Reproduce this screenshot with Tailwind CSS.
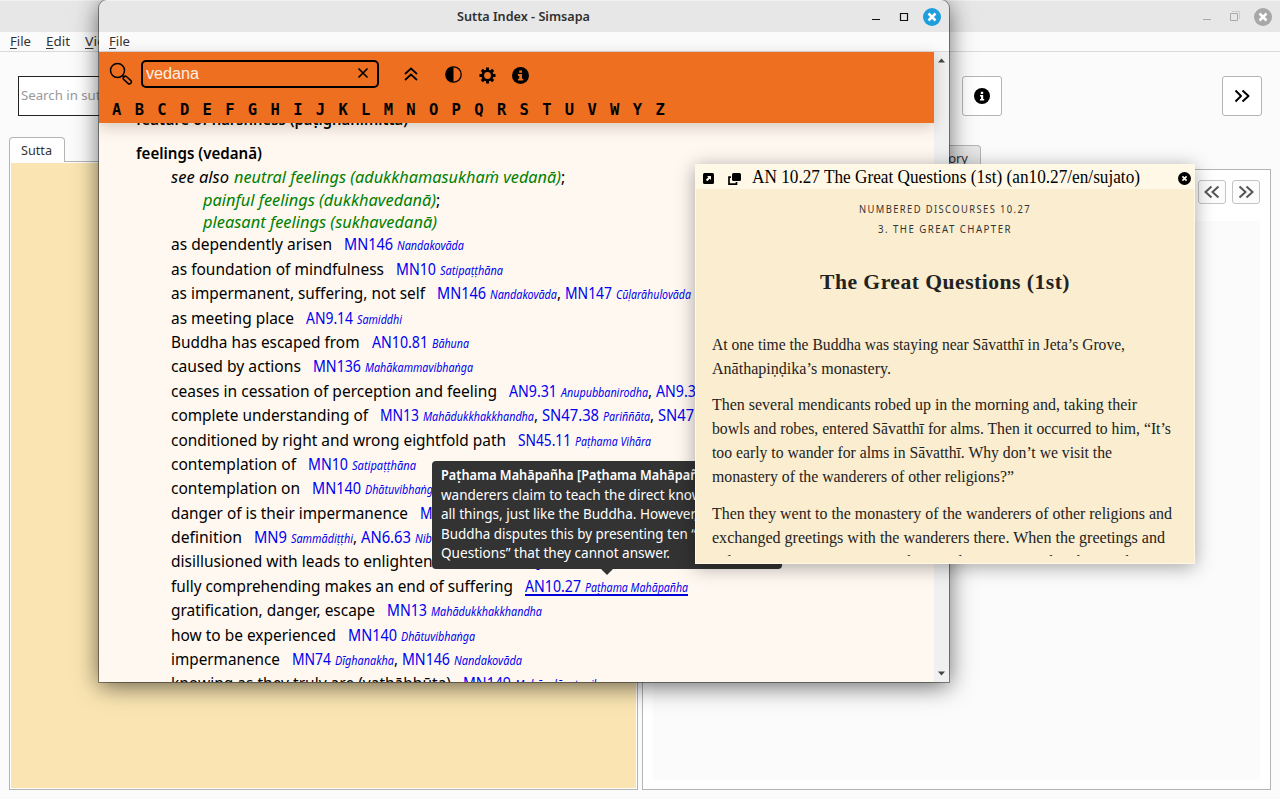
<!DOCTYPE html>
<html lang="en">
<head>
<meta charset="utf-8">
<title>Simsapa</title>
<script src="https://cdn.jsdelivr.net/npm/@tailwindcss/browser@4"></script>
</head>
<body class="relative w-[1280px] h-[799px] overflow-hidden bg-[#fbfbfb] font-['Noto_Sans',sans-serif] text-[#333]">

<!-- Main application window -->
<div class="flex flex-col h-full">
  <div class="h-8 shrink-0 bg-[#e7e7e7] border-t border-[#f0f0f0] flex items-center justify-end pr-2">
    <svg class="mr-3 w-4 h-4" viewBox="0 0 16 16"><path d="M4 10.5h8" stroke="#a9a9a9"/></svg>
    <svg class="mr-[11px] w-4 h-4" viewBox="0 0 16 16" fill="none" stroke="#a9a9a9"><path d="M3.500 4.500h7v7h-7z"/><path d="M5 2.500h7.500V10" stroke="#ccc"/></svg>
    <svg class="w-[18px] h-[18px]" viewBox="0 0 18 18"><circle cx="9" cy="9" r="9" fill="#a7a7a7"/><path d="M5.500 5.500l7 7M12.500 5.500l-7 7" stroke="#fff" stroke-width="2.500"/></svg>
  </div>
  <div class="h-5 shrink-0 border-b border-[#d9d9d9] flex items-center pl-[10px] gap-[15px] text-[13px] leading-none">
    <span data-w="21"><u class="underline-offset-2">F</u>ile</span><span data-w="24"><u class="underline-offset-2">E</u>dit</span><span data-w="31"><u class="underline-offset-2">V</u>iew</span>
  </div>
  <div class="h-[85px] shrink-0 flex items-start pt-6 pl-[18px] pr-[18px]">
    <div class="w-[300px] h-10 border border-[#222] bg-white flex items-center pl-[2px] text-[13px] text-[#999]"><span data-w="98">Search in suttas</span></div>
    <div class="ml-[644px] w-10 h-10 rounded-[3px] border border-[#b4b4b4] bg-white flex items-center justify-center">
      <svg class="w-4 h-4" viewBox="0 0 16 16"><circle cx="8" cy="8" r="8"/><path d="M6.800 3.800h2.400v2.200H6.800zM6 7h3.200v4H10.200v1.500H6V11h1V8.500H6z" fill="#fff"/></svg>
    </div>
    <div class="ml-auto w-10 h-10 rounded-[3px] border border-[#b4b4b4] bg-white flex items-center justify-center">
      <svg class="w-4 h-4" viewBox="0 0 16 16" fill="none" stroke="#000" stroke-width="2" stroke-linejoin="round"><path d="M1.500 2.500L7 8l-5.500 5.500M8.500 2.500L14.500 8l-6 5.500"/></svg>
    </div>
  </div>
  <div class="flex-1 flex gap-1 px-[9px] pb-[9px]">
    <div class="w-[629px] flex flex-col">
      <div class="relative z-10 w-14 h-[25px] -mb-px border border-b-0 border-[#b4b4b4] rounded-t-[4px] bg-white text-[13px] leading-[25px] pl-[11px]"><span data-w="31">Sutta</span></div>
      <div class="flex-1 border border-[#b4b4b4] bg-white p-px"><div class="h-full bg-[#fae5b2]"></div></div>
    </div>
    <div class="w-[629px] flex flex-col pt-2">
      <div class="ml-[270px] w-[69px] h-[25px] -mb-px border border-b-0 border-[#b4b4b4] rounded-t-[4px] bg-[#e6e6e6] text-[13px] leading-[25px] text-right pr-3">History</div>
      <div class="flex-1 border border-[#b4b4b4] bg-white px-[10px] pb-[9px] flex flex-col">
        <div class="h-[51px] flex justify-end items-start pt-[10px] gap-[6px]">
          <div class="w-7 h-6 border border-[#c4c4c4] rounded-[3px] bg-[#fcfcfc] flex items-center justify-center"><svg class="w-4 h-4" viewBox="0 0 16 16" fill="none" stroke="#555" stroke-width="2"><path d="M7.500 2.500L1.500 8l6 5.500M14.500 2.500L8.500 8l6 5.500"/></svg></div>
          <div class="w-7 h-6 border border-[#c4c4c4] rounded-[3px] bg-[#fcfcfc] flex items-center justify-center"><svg class="w-4 h-4" viewBox="0 0 16 16" fill="none" stroke="#555" stroke-width="2"><path d="M1.500 2.500L7.500 8l-6 5.500M8.500 2.500L14.500 8l-6 5.500"/></svg></div>
        </div>
        <div class="flex-1 bg-[#fbfbfb]"></div>
      </div>
    </div>
  </div>
</div>

<!-- Sutta Index window -->
<div class="absolute z-20 left-[99px] top-0 w-[850px] h-[682px] rounded-t-[8px] bg-[#fff8f1] outline outline-black/40 shadow-[0_4px_24px_rgba(0,0,0,0.6)]">
  <div class="h-full flex flex-col overflow-hidden rounded-t-[8px]">
    <div class="h-8 shrink-0 bg-[#e7e7e7] border-t border-[#f0f0f0] flex items-center pr-2">
      <div class="ml-[358px] text-[13px] font-semibold text-[#303030]"><span data-w="133">Sutta Index - Simsapa</span></div>
      <svg class="ml-auto mr-3 w-4 h-4" viewBox="0 0 16 16"><path d="M4 10.500h8" stroke="#111" stroke-width="1.200"/></svg>
      <svg class="mr-[11px] w-4 h-4" viewBox="0 0 16 16"><path d="M4.500 4.500h7v7h-7z" fill="none" stroke="#111" stroke-width="1.200"/></svg>
      <svg class="w-[18px] h-[18px]" viewBox="0 0 18 18"><circle cx="9" cy="9" r="9" fill="#1f9ede"/><path d="M5.500 5.500l7 7M12.500 5.500l-7 7" stroke="#fff" stroke-width="2.500"/></svg>
    </div>
    <div class="h-5 shrink-0 bg-[#fbfbfb] border-b border-[#d9d9d9] flex items-center pl-[10px] text-[13px] leading-none"><span data-w="21"><u class="underline-offset-2">F</u>ile</span></div>
    <div class="flex-1 min-h-0 flex">
      <div class="flex-1 min-w-0 flex flex-col text-black">
        <div class="relative z-10 h-[71px] shrink-0 bg-[#ee6f20] shadow-[0_4px_14px_rgba(60,30,0,0.22)] pt-2">
          <div class="h-7 flex items-center pl-[10px]">
            <svg class="w-6 h-6" viewBox="0 0 24 24" fill="none" stroke="#000" stroke-width="1.500"><circle cx="8.500" cy="8.500" r="7"/><path d="M13.500 13.500l2 2"/><rect x="-1" y="-2" width="9.500" height="4" rx="2" transform="translate(15.500 15.500) rotate(42)"/></svg>
            <div class="ml-2 w-[238px] h-7 rounded-[5px] border-2 border-black flex items-center pl-[3px] pr-2 font-['Liberation_Sans',sans-serif] text-[16px] text-[#fff0e4]"><span data-w="53">vedana</span>
              <svg class="ml-auto -mt-[2px] w-3 h-3" viewBox="0 0 12 12"><path d="M1.500 1.500l9 9M10.500 1.500l-9 9" stroke="#000" stroke-width="1.700"/></svg></div>
            <svg class="ml-[25px] w-[14px] h-[14px]" viewBox="0 0 14 14" fill="none" stroke="#000" stroke-width="1.700"><path d="M1 7l6-5.500L13 7M1 13l6-5.500L13 13"/></svg>
            <svg class="ml-[27px] w-[17px] h-[17px]" viewBox="0 0 17 17"><circle cx="8.500" cy="8.500" r="7.700" fill="none" stroke="#000" stroke-width="1.300"/><path d="M8.500 1a7.500 7.500 0 0 0 0 15z"/></svg>
            <svg class="ml-[17px] mt-[3px] w-[17px] h-[17px]" viewBox="0 0 18 18"><circle cx="9" cy="9" r="5" fill="none" stroke="#000" stroke-width="2.800"/><g stroke="#000" stroke-width="3.200"><path d="M9 .5v3M9 14.500v3M.5 9h3M14.500 9h3M3 3l2.200 2.200M12.800 12.800L15 15M15 3l-2.200 2.200M5.200 12.800L3 15"/></g></svg>
            <svg class="ml-[16px] mt-[3px] w-[17px] h-[17px]" viewBox="0 0 16 16"><circle cx="8" cy="8" r="8"/><path d="M6.800 3.200h2.600v2.300H6.800zM5.600 6.700h3.800v4.300h1.200v1.700H5.600V11h1.200V8.400H5.600z" fill="#ee6f20"/></svg>
          </div>
          <div id="letters" class="mt-3 pl-[7px] flex font-['DejaVu_Sans_Mono',monospace] font-bold text-[15.5px] leading-[20px]"></div>
        </div>
        <div class="flex-1 min-h-0 overflow-hidden pl-[37px] text-[16px] whitespace-nowrap">
          <div class="h-[19px] -mt-[13px] leading-[19px] font-semibold"><span data-w="272">feature of harshness (paṭighanimitta)</span></div>
          <div class="mt-[14px] h-[24px] leading-[20px] font-semibold"><span data-w="126">feelings (vedanā)</span></div>
          <div class="-mt-[2px] pl-[35px] italic leading-[22.6px] text-[#008000]">
            <div class="mt-[1px]"><span data-w="58" class="text-black">see also</span><span data-w="327" class="ml-[5px]">neutral feelings (adukkhamasukhaṁ vedanā)</span><span class="text-black not-italic">;</span></div>
            <div class="pl-8"><span data-w="233">painful feelings (dukkhavedanā)</span><span class="text-black not-italic">;</span></div>
            <div class="pl-8 -mb-[1.4px]"><span data-w="234">pleasant feelings (sukhavedanā)</span></div>
          </div>
          <div id="entries" class="pl-[35px]"></div>
        </div>
      </div>
      <div class="w-[15px] bg-[#f0f0f0] flex flex-col justify-between items-center py-[5px]">
        <svg class="w-[7px] h-[7px]" viewBox="0 0 7 7"><path d="M0 5.500L3.500 1.500 7 5.500z" fill="#444"/></svg>
        <svg class="w-[7px] h-[7px]" viewBox="0 0 7 7"><path d="M0 1.500L3.500 5.500 7 1.500z" fill="#444"/></svg>
      </div>
    </div>
  </div>
</div>

<!-- Tooltip -->
<div class="absolute z-30 left-[432px] top-[461px] w-[350px] h-[108px] rounded-[4px] bg-[#333] text-white text-[14px] leading-[19.5px] pl-[9px] pt-[4px] whitespace-nowrap">
  <div class="font-semibold"><span data-w="277">Paṭhama Mahāpañha [Paṭhama Mahāpañha]</span></div>
  <div><span data-w="313">wanderers claim to teach the direct knowledge of</span></div>
  <div><span data-w="281">all things, just like the Buddha. However, the</span></div>
  <div><span data-w="290">Buddha disputes this by presenting ten “Great</span></div>
  <div><span data-w="229">Questions” that they cannot answer.</span></div>
  <svg class="absolute left-[168px] top-[107px] w-[14px] h-[8px]" viewBox="0 0 14 8"><path d="M0 0h14L7 7z" fill="#333"/></svg>
</div>

<!-- Sutta preview -->
<div class="absolute z-40 left-[695px] top-[164px] w-[500px] h-[400px] border border-[#fff8e6] bg-[#fbedcf] shadow-[0_3px_18px_rgba(0,0,0,0.35)] flex flex-col font-['Liberation_Serif',serif] text-[#222] whitespace-nowrap">
  <div class="h-6 shrink-0 bg-[#fff8e6] flex items-center pl-[7px] pr-[3px] text-black text-[18px] leading-6">
    <svg class="mt-[3px] w-[11px] h-[11px] shrink-0" viewBox="0 0 11 11"><rect width="11" height="11" rx="1.500"/><path d="M4 3h4v4L6.800 5.800 4.300 8.300 2.800 6.800 5.300 4.300z" fill="#fff8e6"/></svg>
    <svg class="ml-[14px] mt-[4px] w-[13px] h-[12px] shrink-0" viewBox="0 0 13 12"><rect x="4" width="9" height="8" rx="1.500"/><path d="M3 4.200H1V11.200H8.500V9" fill="none" stroke="#000" stroke-width="1.700"/></svg>
    <span class="ml-[11px]" data-w="388">AN 10.27 The Great Questions (1st) (an10.27/en/sujato)</span>
    <svg class="ml-auto mt-[3px] w-[13px] h-[13px] shrink-0" viewBox="0 0 13 13"><circle cx="6.500" cy="6.500" r="6.500"/><path d="M4.400 4.400l4.200 4.200M8.600 4.400L4.400 8.600" stroke="#fff8e6" stroke-width="1.700"/></svg>
  </div>
  <div class="flex-1 min-h-0 overflow-hidden mb-[7px] px-4 text-[16px] leading-6">
    <div class="mt-[10px] text-center font-['Noto_Sans',sans-serif] text-[10px] leading-[20px] text-[#333]">
      <div><span data-w="172" class="tracking-[1.5px]">NUMBERED DISCOURSES 10.27</span></div>
      <div><span data-w="134" class="tracking-[1.5px]">3. THE GREAT CHAPTER</span></div>
    </div>
    <div class="mt-[27px] text-center text-[22px] leading-[32px] font-bold"><span data-w="250" class="tracking-[0.5px]">The Great Questions (1st)</span></div>
    <div class="mt-[35px]"><span data-w="413">At one time the Buddha was staying near Sāvatthī in Jeta’s Grove,</span><br><span data-w="179">Anāthapiṇḍika’s monastery.</span></div>
    <div class="mt-3"><span data-w="425">Then several mendicants robed up in the morning and, taking their</span><br><span data-w="459">bowls and robes, entered Sāvatthī for alms. Then it occurred to him, “It’s</span><br><span data-w="400">too early to wander for alms in Sāvatthī. Why don’t we visit the</span><br><span data-w="302">monastery of the wanderers of other religions?”</span></div>
    <div class="mt-[13px]"><span data-w="460">Then they went to the monastery of the wanderers of other religions and</span><br><span data-w="453">exchanged greetings with the wanderers there. When the greetings and</span><br><span data-w="447">polite conversation were over, they sat down to one side. The wanderers</span></div>
  </div>
</div>

<script>
// Each entry: text, its width, then references as [code, width, title, width, highlighted]
const entries = [
  ["as dependently arisen",161,["MN146",49,"Nandakovāda",67]],
  ["as foundation of mindfulness",213,["MN10",40,"Satipaṭṭhāna",63]],
  ["as impermanent, suffering, not self",254,["MN146",49,"Nandakovāda",67],["MN147",47,"Cūḷarāhulovāda",75]],
  ["as meeting place",123,["AN9.14",47,"Samiddhi",45]],
  ["Buddha has escaped from",188.5,["AN10.81",56,"Bāhuna",37]],
  ["caused by actions",130,["MN136",48,"Mahākammavibhaṅga",108]],
  ["ceases in cessation of perception and feeling",326,["AN9.31",48,"Anupubbanirodha",87],["AN9.32",48,"Nibbānasukha",70]],
  ["complete understanding of",197,["MN13",39,"Mahādukkhakkhandha",111],["SN47.38",57,"Pariññāta",47],["SN47.49",57,"Vedanā",40]],
  ["conditioned by right and wrong eightfold path",335,["SN45.11",53,"Paṭhama Vihāra",76]],
  ["contemplation of",125,["MN10",40,"Satipaṭṭhāna",64]],
  ["contemplation on",129,["MN140",49,"Dhātuvibhaṅga",74]],
  ["danger of is their impermanence",237,["MN13",39,"Mahādukkhakkhandha",111]],
  ["definition",71,["MN9",33,"Sammādiṭṭhi",62],["AN6.63",50,"Nibbedhika",56]],
  ["disillusioned with leads to enlightenment",300,["MN74",39,"Dīghanakha",59]],
  ["fully comprehending makes an end of suffering",342,["AN10.27",56,"Paṭhama Mahāpañha",103,true]],
  ["gratification, danger, escape",204,["MN13",40,"Mahādukkhakkhandha",111]],
  ["how to be experienced",165,["MN140",49,"Dhātuvibhaṅga",74]],
  ["impermanence",109,["MN74",39,"Dīghanakha",59],["MN146",48,"Nandakovāda",68]],
  ["knowing as they truly are (yathābhūta)",280,["MN149",48,"Mahāsaḷāyatanika",90]]
];
document.getElementById("entries").innerHTML = entries.map(([t, w, ...refs]) =>
  `<div class="h-[24.4px] leading-[24.4px] flex items-baseline"><span data-w="${w}">${t}</span>` +
  refs.map(([c, cw, n, nw, on], i) =>
    (i ? '<span data-w="4">,</span>' : '') +
    `<span class="${i ? 'ml-[4px]' : 'ml-[12px]'} flex items-baseline text-[#0000ee] ${on ? 'h-[22px] border-b-2 border-[#0000dd]' : ''}"><span data-w="${cw}">${c}</span><span data-w="${nw}" class="ml-1 italic text-[12.5px]">${n}</span></span>`
  ).join("") + `</div>`).join("");
document.getElementById("letters").innerHTML = [..."ABCDEFGHIJKLMNOPQRSTUVWYZ"].map(l => `<span class="w-[22.65px] shrink-0 pl-[6px]">${l}</span>`).join("");

function fit() {
  document.querySelectorAll("[data-w]").forEach(el => {
    el.classList.add("inline-block", "origin-left", "whitespace-nowrap", "shrink-0");
    el.style.transform = "none";
    el.style.marginRight = "0px";
    const natural = el.getBoundingClientRect().width, w = +el.dataset.w;
    el.style.transform = `scaleX(${w / natural})`;
    el.style.marginRight = `${w - natural}px`;
  });
}
fit();
window.addEventListener("load", () => { fit(); requestAnimationFrame(fit); });
document.fonts.ready.then(fit);
</script>
</body>
</html>
